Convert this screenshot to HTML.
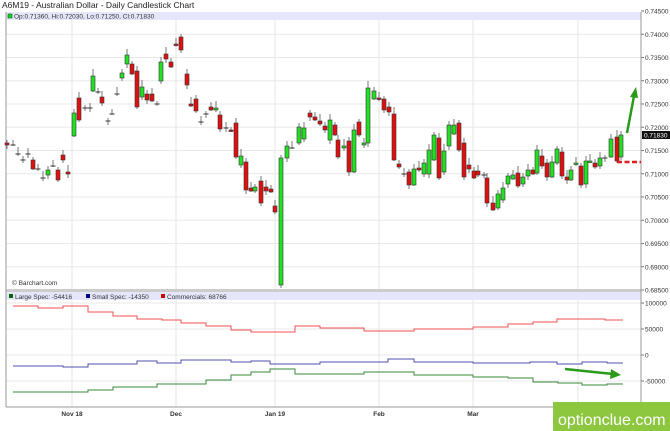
<!DOCTYPE html>
<html><head><meta charset="utf-8"><style>
html,body{margin:0;padding:0;background:#fff;width:670px;height:431px;overflow:hidden;font-family:"Liberation Sans",sans-serif}
svg{display:block}
</style></head><body>
<svg id="s" width="670" height="431" xmlns="http://www.w3.org/2000/svg" font-family="Liberation Sans, sans-serif">
<rect width="670" height="431" fill="#fff"/>
<text x="2" y="8" font-size="8.5" fill="#222">A6M19 - Australian Dollar - Daily Candlestick Chart</text>
<g id="grid"></g>
<rect x="6" y="12" width="635" height="8" fill="#e6e6fb"/>
<rect x="8" y="14" width="4" height="4" fill="#2c2" stroke="#060" stroke-width="0.6"/>
<text x="14" y="18.5" font-size="6.5" fill="#333">Op:0.71360, Hi:0.72030, Lo:0.71250, Cl:0.71830</text>
<rect x="6" y="289" width="635" height="3" fill="#ccc"/>
<rect x="6" y="292" width="635" height="8" fill="#e6e6fb"/>
<rect x="9" y="294" width="4" height="4" fill="#060"/>
<text x="15" y="299" font-size="6.5" fill="#333">Large Spec: -54416</text>
<rect x="86" y="294" width="4" height="4" fill="#008"/>
<text x="92" y="299" font-size="6.5" fill="#333">Small Spec: -14350</text>
<rect x="161" y="294" width="4" height="4" fill="#c00"/>
<text x="167" y="299" font-size="6.5" fill="#333">Commercials: 68766</text>
<text x="12" y="285" font-size="6.5" fill="#333">© Barchart.com</text>
<line x1="6" y1="12" x2="6" y2="407" stroke="#999" stroke-width="1"/>
<line x1="641" y1="12" x2="641" y2="407" stroke="#999" stroke-width="1"/>
<line x1="6" y1="407" x2="641" y2="407" stroke="#999" stroke-width="1"/>
<g id="c"></g>
<g id="l" fill="none" stroke-width="1"></g>
<line x1="617" y1="162" x2="641" y2="162" stroke="#e02020" stroke-width="2.5" stroke-dasharray="5,2.5"/>
<line x1="627" y1="133" x2="634" y2="96" stroke="#2a9a1a" stroke-width="2.5"/>
<polygon points="636,87 630,97 638,98" fill="#2a9a1a"/>
<line x1="565" y1="369" x2="613" y2="374" stroke="#2a9a1a" stroke-width="2.5"/>
<polygon points="621,375 611,369 610,379" fill="#2a9a1a"/>
<rect x="642" y="131" width="28" height="8" fill="#111"/>
<text x="644" y="137.5" font-size="6.5" fill="#fff">0.71830</text>
<rect x="553" y="402" width="117" height="29" fill="#8dc63f"/>
<text x="558" y="425" font-size="16" fill="#fff">optionclue.com</text>
</svg>
<script>
var g=document.getElementById('grid'),h='';
var vx=[72,176,275,379,473,578];
vx.forEach(function(x){h+='<line x1="'+x+'" y1="20" x2="'+x+'" y2="289" stroke="#e4e4e4"/><line x1="'+x+'" y1="300" x2="'+x+'" y2="407" stroke="#e4e4e4"/>';});
var labs=['0.74500','0.74000','0.73500','0.73000','0.72500','0.72000','0.71500','0.71000','0.70500','0.70000','0.69500','0.69000','0.68500'];
labs.forEach(function(t,i){var y=11+i*23.25;if(i>0&&i<12)h+='<line x1="6" y1="'+y+'" x2="641" y2="'+y+'" stroke="#e8e8e8"/>';h+='<line x1="641" y1="'+y+'" x2="644" y2="'+y+'" stroke="#777"/><text x="645" y="'+(y+2.5)+'" font-size="6.5" fill="#333">'+t+'</text>';});
[['100000',303],['50000',329],['0',355],['-50000',381]].forEach(function(a){h+='<line x1="6" y1="'+a[1]+'" x2="641" y2="'+a[1]+'" stroke="#e8e8e8"/><line x1="641" y1="'+a[1]+'" x2="644" y2="'+a[1]+'" stroke="#777"/><text x="645" y="'+(a[1]+2.5)+'" font-size="6.5" fill="#333">'+a[0]+'</text>';});
[['Nov 18',72],['Dec',176],['Jan 19',275],['Feb',379],['Mar',473]].forEach(function(a){h+='<text x="'+a[1]+'" y="416" font-size="6.5" font-weight="bold" fill="#333" text-anchor="middle">'+a[0]+'</text>';});
g.innerHTML=h;
var C=[[7,'r',143,145],[13,'d',145],[18,'d',154],[23,'d',160],[28,'d',154],[33,'r',160,169],[38,'d',169],[43,'d',178],[48,'g',170,175],[53,'d',166],[58,'r',170,180],[63,'r',155,160],[68,'r',172,174],[74,'g',113,136],[79,'r',98,120],[85,'d',108],[90,'d',108],[93,'g',76,91],[98,'d',92],[102,'r',97,103],[108,'d',121],[112,'d',114],[117,'d',94],[122,'g',73,78],[127,'g',55,64],[132,'r',64,74],[137,'r',71,107],[142,'g',87,97],[147,'r',94,100],[152,'r',94,101],[157,'d',104],[161,'g',62,81],[166,'r',54,59],[171,'r',62,67],[176,'r',44,45],[181,'r',37,50],[187,'r',74,85],[191,'r',104,106],[196,'r',99,111],[201,'d',122],[206,'d',114],[211,'r',107,110],[216,'g',108,110],[220,'r',115,129],[226,'d',128],[231,'r',130,131],[236,'r',123,157],[241,'g',156,165],[246,'r',162,190],[251,'r',188,191],[255,'g',187,191],[261,'r',181,203],[266,'r',187,191],[271,'r',189,192],[275,'r',206,212],[281,'g',158,285],[287,'g',146,158],[292,'d',148],[299,'g',127,143],[304,'g',128,139],[310,'r',113,117],[315,'r',117,120],[320,'r',121,124],[325,'r',126,130],[330,'g',120,140],[335,'r',125,135],[338,'r',140,157],[344,'g',146,148],[349,'r',141,172],[354,'g',130,172],[359,'r',122,135],[364,'g',143,145],[368,'g',88,143],[374,'g',91,99],[379,'r',98,99],[384,'r',99,110],[389,'r',107,112],[394,'r',114,160],[399,'r',164,167],[404,'d',174],[409,'r',172,185],[414,'g',169,185],[419,'r',168,170],[424,'g',163,174],[429,'g',150,174],[434,'g',135,160],[439,'r',138,178],[444,'g',151,172],[449,'g',125,146],[454,'g',125,134],[459,'r',123,150],[464,'r',143,177],[469,'r',165,169],[474,'r',171,178],[478,'r',171,175],[484,'d',175],[487,'r',178,203],[493,'r',203,210],[498,'g',194,208],[503,'g',188,200],[508,'g',176,184],[513,'g',175,179],[518,'r',173,186],[523,'g',177,184],[528,'g',170,176],[533,'r',170,174],[537,'g',150,173],[542,'r',156,166],[547,'r',163,177],[552,'g',162,177],[557,'g',149,163],[562,'r',152,176],[567,'r',177,180],[571,'g',170,180],[576,'g',163,164],[581,'r',166,185],[586,'g',161,184],[590,'g',161,162],[595,'r',163,167],[600,'g',158,166],[605,'d',158],[611,'g',139,157],[617,'r',137,161],[621,'g',135,157]];
var s='';
C.forEach(function(c,i){var x=c[0],t=c[1];var a=c[2],b=c[3]||c[2];var w=3+((i*7)%5);
s+='<line x1="'+x+'" y1="'+(a-w)+'" x2="'+x+'" y2="'+(b+4-((i*3)%4))+'" stroke="#555" stroke-width="0.8"/>';
if(t=='d')s+='<line x1="'+(x-2.5)+'" y1="'+a+'" x2="'+(x+2.5)+'" y2="'+a+'" stroke="#333" stroke-width="1"/>';
else s+='<rect x="'+(x-2)+'" y="'+a+'" width="4" height="'+Math.max(b-a,1.5)+'" fill="'+(t=='g'?'#22e022':'#e01010')+'" stroke="#333" stroke-width="0.6"/>';});
document.getElementById('c').innerHTML=s;
function step(p){var d='M'+p[0][0]+' '+p[0][2];p.forEach(function(q){d+=' V'+q[2]+' H'+q[1];});return d;}
var R=[[13,38,306],[38,63,308],[63,88,306],[88,113,312],[113,137,316],[137,162,319],[162,181,320],[181,206,323],[206,231,326],[231,251,330],[251,295,332],[295,320,326],[320,364,328],[364,414,331],[414,473,329],[473,508,327],[508,533,324],[533,557,322],[557,605,319],[605,623,320]];
var B=[[13,63,366],[63,88,367],[88,137,364],[137,157,361],[157,181,363],[181,231,360],[231,251,362],[251,270,361],[270,320,364],[320,388,362],[388,414,359],[414,473,362],[473,530,363],[530,557,362],[557,582,364],[582,607,362],[607,623,363]];
var G=[[13,88,392],[88,113,390],[113,157,387],[157,206,384],[206,231,380],[231,251,375],[251,270,372],[270,295,369],[295,364,374],[364,414,372],[414,473,375],[473,508,377],[508,533,378],[533,558,382],[558,582,383],[582,607,385],[607,623,384]];
document.getElementById('l').innerHTML='<path d="'+step(R)+'" stroke="#f05050"/><path d="'+step(B)+'" stroke="#5050b0"/><path d="'+step(G)+'" stroke="#3a8a3a"/>';
</script>
</body></html>
